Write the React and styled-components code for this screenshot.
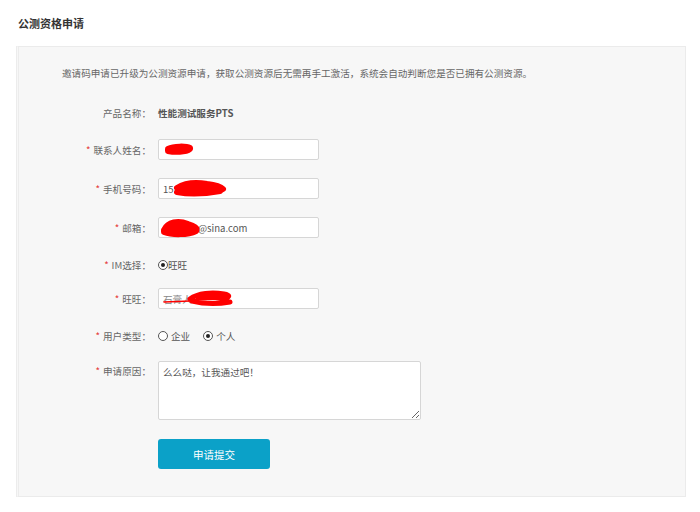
import React from "react";
import styled, { createGlobalStyle } from "styled-components";

const Global = createGlobalStyle`
  html, body { margin: 0; padding: 0; background: #fff; }
  body { font-family: "Noto Sans CJK SC", "Noto Sans", sans-serif; color: #555; }
`;

const Page = styled.div`
  width: 700px;
  height: 512px;
  box-sizing: border-box;
  padding: 0 14px 0 16px;
`;

const Header = styled.div`
  height: 46px;
  display: flex;
  align-items: center;
  padding-left: 2px;
  font-size: 11px;
  font-weight: 700;
  color: #333;
`;

const Panel = styled.div`
  border: 1px solid #ebebeb;
  border-left: 3px double #ececec;
  background: #f7f7f7;
  padding: 19px 0 27px 0;
`;

const Intro = styled.p`
  margin: 0 0 0 43px;
  font-size: 9.6px;
  line-height: 14px;
  color: #666;
`;

const Form = styled.div`
  display: flex;
  flex-direction: column;
  margin-top: 22px;
`;

const Row = styled.div`
  display: grid;
  grid-template-columns: 132px auto;
  column-gap: 7px;
  align-items: ${(p) => (p.$top ? "start" : "center")};
  min-height: 21px;
  margin-top: ${(p) => p.$gap || 0}px;
`;

const Label = styled.div`
  text-align: right;
  font-size: 9.6px;
  line-height: 14px;
  color: #666;
  white-space: nowrap;
  padding-top: ${(p) => (p.$top ? 3 : 0)}px;
`;

const Star = styled.span`
  color: #e53c3c;
  margin-right: 3px;
`;

const Value = styled.div`
  font-size: 9.6px;
  line-height: 14px;
  font-weight: 700;
  color: #555;
`;

const FieldWrap = styled.div`
  position: relative;
  width: 161px;
  height: 21px;
`;

const Input = styled.input`
  display: block;
  box-sizing: border-box;
  width: 100%;
  height: 21px;
  margin: 0;
  border: 1px solid #d6d6d6;
  border-radius: 2px;
  background: #fff;
  padding: 0 0 0 ${(p) => p.$indent || 4}px;
  font-family: inherit;
  font-size: 9.6px;
  color: ${(p) => (p.$faint ? "#888" : "#555")};
  outline: none;
`;

const Censor = styled.svg`
  position: absolute;
  left: 0;
  top: 0;
  width: 161px;
  height: 26px;
  pointer-events: none;
  overflow: visible;
`;

const Options = styled.div`
  display: flex;
  align-items: center;
  gap: 13px;
`;

const Option = styled.label`
  display: inline-flex;
  align-items: center;
  gap: ${(p) => (p.$tight ? 0 : 3)}px;
  font-size: 9.6px;
  line-height: 14px;
  color: #555;
`;

const Radio = styled.span`
  box-sizing: border-box;
  width: 10px;
  height: 10px;
  border: 1px solid #555;
  border-radius: 50%;
  display: inline-flex;
  align-items: center;
  justify-content: center;
  background: #fff;
  &::after {
    content: "";
    width: 4px;
    height: 4px;
    border-radius: 50%;
    background: ${(p) => (p.$checked ? "#222" : "transparent")};
  }
`;

const TextArea = styled.textarea`
  display: block;
  box-sizing: border-box;
  width: 263px;
  height: 59px;
  margin: 0;
  border: 1px solid #d6d6d6;
  border-radius: 2px;
  background: #fff;
  padding: 3px 4px;
  font-family: inherit;
  font-size: 9.6px;
  line-height: 14px;
  color: #555;
  outline: none;
`;

const Submit = styled.button`
  display: block;
  width: 112px;
  height: 30px;
  margin: 0;
  border: none;
  border-radius: 3px;
  background: #0ba1c8;
  color: #fff;
  font-family: inherit;
  font-size: 10.5px;
  cursor: pointer;
`;

const red = "#ff0000";

export default function App() {
  return (
    <Page>
      <Global />
      <Header>公测资格申请</Header>
      <Panel>
        <Intro>
          邀请码申请已升级为公测资源申请，获取公测资源后无需再手工激活，系统会自动判断您是否已拥有公测资源。
        </Intro>
        <Form>
          <Row>
            <Label>产品名称：</Label>
            <Value>性能测试服务PTS</Value>
          </Row>

          <Row $gap={16}>
            <Label><Star>*</Star>联系人姓名：</Label>
            <FieldWrap>
              <Input readOnly defaultValue="" />
              <Censor viewBox="0 0 161 26">
                <path d="M10 10 C16 7, 28 7, 32 9 C33 12, 20 14, 10 12 Z" fill={red} stroke={red} strokeWidth="6" strokeLinejoin="round" />
              </Censor>
            </FieldWrap>
          </Row>

          <Row $gap={18}>
            <Label><Star>*</Star>手机号码：</Label>
            <FieldWrap>
              <Input readOnly defaultValue="15" />
              <Censor viewBox="0 0 161 26">
                <path d="M19 10 C27 5, 38 4, 49 6 C57 7, 62 8, 65 11 M19 14 C30 16, 45 16, 62 13 M23 12 C36 10, 49 10, 60 11" fill="none" stroke={red} strokeWidth="6" strokeLinecap="round" />
              </Censor>
            </FieldWrap>
          </Row>

          <Row $gap={18}>
            <Label><Star>*</Star>邮箱：</Label>
            <FieldWrap>
              <Input readOnly defaultValue="@sina.com" $indent={39} />
              <Censor viewBox="0 0 161 26">
                <path d="M6 13 C10 5, 20 3, 30 7 C36 9, 40 11, 38 14 C30 18, 14 18, 6 15 Z" fill={red} stroke={red} strokeWidth="6" strokeLinejoin="round" />
              </Censor>
            </FieldWrap>
          </Row>

          <Row $gap={16}>
            <Label><Star>*</Star>IM选择：</Label>
            <Options>
              <Option $tight><Radio $checked />旺旺</Option>
            </Options>
          </Row>

          <Row $gap={13}>
            <Label><Star>*</Star>旺旺：</Label>
            <FieldWrap>
              <Input readOnly defaultValue="石膏人" $faint />
              <Censor viewBox="0 0 161 26">
                <path d="M6 14 L32 13" fill="none" stroke={red} strokeWidth="1.5" strokeLinecap="round" />
                <path d="M32 11 C40 5, 54 4, 66 6 C72 7, 72 9, 68 10 M34 13 C46 16, 60 16, 72 14 M40 10 C50 9, 60 10, 66 11" fill="none" stroke={red} strokeWidth="5" strokeLinecap="round" />
              </Censor>
            </FieldWrap>
          </Row>

          <Row $gap={16}>
            <Label><Star>*</Star>用户类型：</Label>
            <Options>
              <Option><Radio />企业</Option>
              <Option><Radio $checked />个人</Option>
            </Options>
          </Row>

          <Row $gap={15} $top>
            <Label $top><Star>*</Star>申请原因：</Label>
            <TextArea readOnly defaultValue="么么哒，让我通过吧！" />
          </Row>

          <Row $gap={19}>
            <div />
            <Submit>申请提交</Submit>
          </Row>
        </Form>
      </Panel>
    </Page>
  );
}
